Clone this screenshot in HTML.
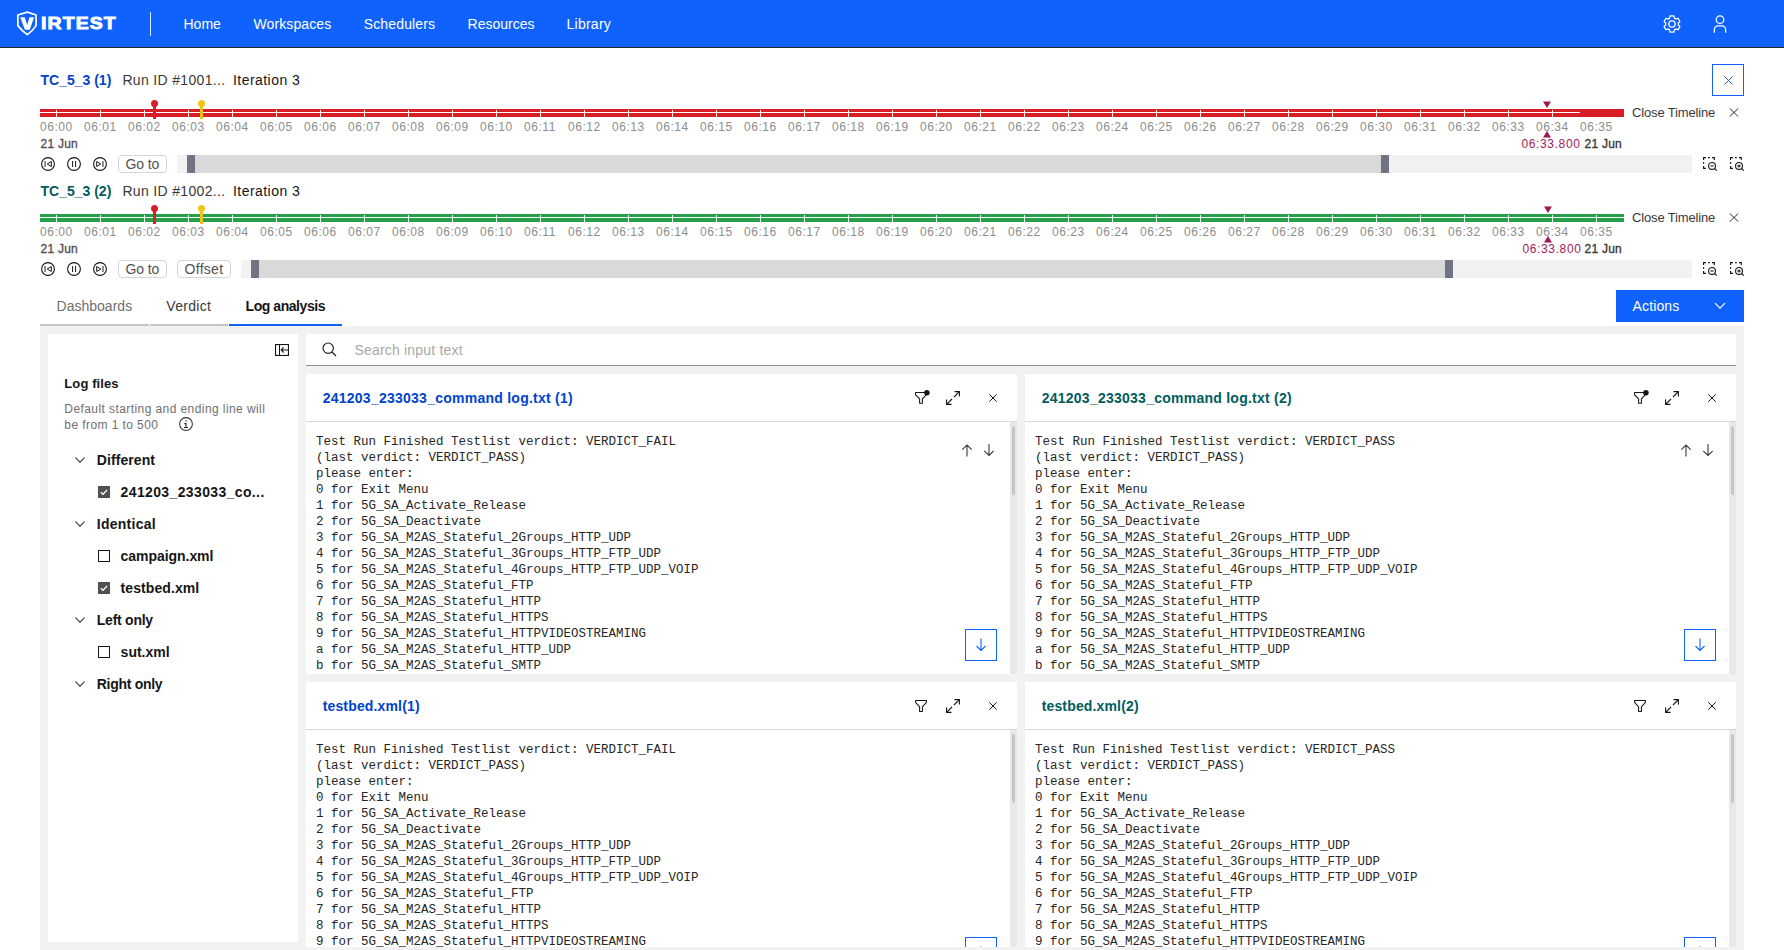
<!DOCTYPE html>
<html><head><meta charset="utf-8"><title>Virtest</title><style>
*{margin:0;padding:0;box-sizing:border-box}
html,body{width:1784px;height:950px;overflow:hidden;background:#fff;font-family:"Liberation Sans",sans-serif}
.t{position:absolute;white-space:pre}
.a{position:absolute}
svg{position:absolute;overflow:visible}
</style></head>
<body>
<div class="a" style="left:0;top:0;width:1784px;height:47px;background:#0f62fe"></div>
<div class="a" style="left:0;top:47px;width:1784px;height:1px;background:#262626"></div>
<svg style="left:16px;top:10px" width="22" height="27" viewBox="0 0 22 27">
<path d="M11.3 2.1 L20.05 5 V15.6 Q17 20.5 11.3 24.6 Q5.6 20.5 1.85 15.6 V5 Z" fill="none" stroke="#fff" stroke-width="1.75" stroke-linejoin="round"/>
<path d="M4.2 7.2 L8.7 7.2 L11.3 15 L13.4 7.2 L18.1 7.2 L13.8 19.8 L8.9 19.8 Z" fill="#fff"/>
</svg>
<div class="t" style="left:41.4px;top:14.91px;font-size:17px;line-height:17px;color:#fff;font-weight:bold;letter-spacing:1px;-webkit-text-stroke:0.9px #fff;transform:scaleX(1.14);transform-origin:0 0;">IRTEST</div>

<div class="a" style="left:150px;top:12px;width:1px;height:24px;background:rgba(255,255,255,0.85)"></div>
<div class="t" style="left:183.5px;top:17.25px;font-size:14px;line-height:14px;color:#fff;font-weight:normal;letter-spacing:0px;">Home</div>

<div class="t" style="left:253.5px;top:17.25px;font-size:14px;line-height:14px;color:#fff;font-weight:normal;letter-spacing:0.1px;">Workspaces</div>

<div class="t" style="left:363.7px;top:17.25px;font-size:14px;line-height:14px;color:#fff;font-weight:normal;letter-spacing:0.15px;">Schedulers</div>

<div class="t" style="left:467.6px;top:17.25px;font-size:14px;line-height:14px;color:#fff;font-weight:normal;letter-spacing:0px;">Resources</div>

<div class="t" style="left:566.5px;top:17.25px;font-size:14px;line-height:14px;color:#fff;font-weight:normal;letter-spacing:0.25px;">Library</div>

<svg style="left:1662px;top:14px" width="20" height="20" viewBox="0 0 32 32">
<path fill="#fff" d="M27 16.76c0-.25 0-.5 0-.76s0-.51 0-.77l1.92-1.68A2 2 0 0 0 29.3 11L26.94 7a2 2 0 0 0-1.73-1 2 2 0 0 0-.64.1l-2.43.82a11.35 11.35 0 0 0-1.31-.75l-.51-2.52a2 2 0 0 0-2-1.61h-4.68a2 2 0 0 0-2 1.61l-.51 2.52a11.48 11.48 0 0 0-1.32.75l-2.38-.86A2 2 0 0 0 6.79 6a2 2 0 0 0-1.73 1L2.7 11a2 2 0 0 0 .41 2.51L5 15.24c0 .25 0 .5 0 .76s0 .51 0 .77l-1.92 1.68A2 2 0 0 0 2.7 21l2.36 4a2 2 0 0 0 1.73 1 2 2 0 0 0 .64-.1l2.43-.82a11.35 11.35 0 0 0 1.31.75l.51 2.52a2 2 0 0 0 2 1.61h4.72a2 2 0 0 0 2-1.61l.51-2.52a11.48 11.48 0 0 0 1.32-.75l2.42.82a2 2 0 0 0 .64.1 2 2 0 0 0 1.73-1l2.28-4a2 2 0 0 0-.41-2.51ZM25.21 24l-3.43-1.16a8.86 8.86 0 0 1-2.71 1.57L18.36 28h-4.72l-.71-3.55a9.36 9.36 0 0 1-2.7-1.57L6.79 24l-2.36-4 2.72-2.4a8.9 8.9 0 0 1 0-3.13L4.43 12l2.36-4 3.43 1.16a8.86 8.86 0 0 1 2.71-1.57L13.64 4h4.72l.71 3.55a9.36 9.36 0 0 1 2.7 1.57L25.21 8l2.36 4-2.72 2.4a8.9 8.9 0 0 1 0 3.13L27.57 20Z"/>
<path fill="#fff" d="M16 22a6 6 0 1 1 6-6 5.94 5.94 0 0 1-6 6Zm0-10a3.91 3.91 0 0 0-4 4 3.91 3.91 0 0 0 4 4 3.91 3.91 0 0 0 4-4 3.91 3.91 0 0 0-4-4Z"/>
</svg>
<svg style="left:1710px;top:14px" width="20" height="20" viewBox="0 0 32 32">
<path fill="#fff" d="M16 4a5 5 0 1 1-5 5 5 5 0 0 1 5-5m0-2a7 7 0 1 0 7 7 7 7 0 0 0-7-7ZM26 30h-2v-5a5 5 0 0 0-5-5h-6a5 5 0 0 0-5 5v5H6v-5a7 7 0 0 1 7-7h6a7 7 0 0 1 7 7Z"/>
</svg><div class="a" style="left:1712px;top:64px;width:32px;height:32px;border:1px solid #0f62fe"></div><svg style="left:1723.5px;top:75.5px" width="9" height="9" viewBox="0 0 9 9"><path d="M0.5 0.5 L8.5 8.5 M8.5 0.5 L0.5 8.5" stroke="#0f62fe" stroke-width="1"/></svg><div class="t" style="left:40.5px;top:73.15px;font-size:14px;line-height:14px;color:#0043ce;font-weight:bold;">TC_5_3 (1)</div>

<div class="t" style="left:122.4px;top:73.15px;font-size:14px;line-height:14px;color:#393939;font-weight:normal;letter-spacing:0.33px;">Run ID #1001...</div>

<div class="t" style="left:233px;top:73.15px;font-size:14px;line-height:14px;color:#161616;font-weight:normal;letter-spacing:0.45px;">Iteration 3</div>

<div class="a" style="left:40px;top:109px;width:1584px;height:8px;background:#da1e28"></div>
<div class="a" style="left:40px;top:112px;width:1540px;height:1px;background:#fff"></div>
<div class="a" style="left:56px;top:110px;width:1px;height:7px;background:#fff"></div>
<div class="a" style="left:100px;top:110px;width:1px;height:7px;background:#fff"></div>
<div class="a" style="left:144px;top:110px;width:1px;height:7px;background:#fff"></div>
<div class="a" style="left:188px;top:110px;width:1px;height:7px;background:#fff"></div>
<div class="a" style="left:232px;top:110px;width:1px;height:7px;background:#fff"></div>
<div class="a" style="left:276px;top:110px;width:1px;height:7px;background:#fff"></div>
<div class="a" style="left:320px;top:110px;width:1px;height:7px;background:#fff"></div>
<div class="a" style="left:364px;top:110px;width:1px;height:7px;background:#fff"></div>
<div class="a" style="left:408px;top:110px;width:1px;height:7px;background:#fff"></div>
<div class="a" style="left:452px;top:110px;width:1px;height:7px;background:#fff"></div>
<div class="a" style="left:496px;top:110px;width:1px;height:7px;background:#fff"></div>
<div class="a" style="left:540px;top:110px;width:1px;height:7px;background:#fff"></div>
<div class="a" style="left:584px;top:110px;width:1px;height:7px;background:#fff"></div>
<div class="a" style="left:628px;top:110px;width:1px;height:7px;background:#fff"></div>
<div class="a" style="left:672px;top:110px;width:1px;height:7px;background:#fff"></div>
<div class="a" style="left:716px;top:110px;width:1px;height:7px;background:#fff"></div>
<div class="a" style="left:760px;top:110px;width:1px;height:7px;background:#fff"></div>
<div class="a" style="left:804px;top:110px;width:1px;height:7px;background:#fff"></div>
<div class="a" style="left:848px;top:110px;width:1px;height:7px;background:#fff"></div>
<div class="a" style="left:892px;top:110px;width:1px;height:7px;background:#fff"></div>
<div class="a" style="left:936px;top:110px;width:1px;height:7px;background:#fff"></div>
<div class="a" style="left:980px;top:110px;width:1px;height:7px;background:#fff"></div>
<div class="a" style="left:1024px;top:110px;width:1px;height:7px;background:#fff"></div>
<div class="a" style="left:1068px;top:110px;width:1px;height:7px;background:#fff"></div>
<div class="a" style="left:1112px;top:110px;width:1px;height:7px;background:#fff"></div>
<div class="a" style="left:1156px;top:110px;width:1px;height:7px;background:#fff"></div>
<div class="a" style="left:1200px;top:110px;width:1px;height:7px;background:#fff"></div>
<div class="a" style="left:1244px;top:110px;width:1px;height:7px;background:#fff"></div>
<div class="a" style="left:1288px;top:110px;width:1px;height:7px;background:#fff"></div>
<div class="a" style="left:1332px;top:110px;width:1px;height:7px;background:#fff"></div>
<div class="a" style="left:1376px;top:110px;width:1px;height:7px;background:#fff"></div>
<div class="a" style="left:1420px;top:110px;width:1px;height:7px;background:#fff"></div>
<div class="a" style="left:1464px;top:110px;width:1px;height:7px;background:#fff"></div>
<div class="a" style="left:1508px;top:110px;width:1px;height:7px;background:#fff"></div>
<div class="a" style="left:1552px;top:110px;width:1px;height:7px;background:#fff"></div>
<div class="t" style="left:40px;top:121.14px;font-size:12px;line-height:12px;color:#8d8d8d;font-weight:normal;letter-spacing:0.55px;">06:00</div>
<div class="t" style="left:84px;top:121.14px;font-size:12px;line-height:12px;color:#8d8d8d;font-weight:normal;letter-spacing:0.55px;">06:01</div>
<div class="t" style="left:128px;top:121.14px;font-size:12px;line-height:12px;color:#8d8d8d;font-weight:normal;letter-spacing:0.55px;">06:02</div>
<div class="t" style="left:172px;top:121.14px;font-size:12px;line-height:12px;color:#8d8d8d;font-weight:normal;letter-spacing:0.55px;">06:03</div>
<div class="t" style="left:216px;top:121.14px;font-size:12px;line-height:12px;color:#8d8d8d;font-weight:normal;letter-spacing:0.55px;">06:04</div>
<div class="t" style="left:260px;top:121.14px;font-size:12px;line-height:12px;color:#8d8d8d;font-weight:normal;letter-spacing:0.55px;">06:05</div>
<div class="t" style="left:304px;top:121.14px;font-size:12px;line-height:12px;color:#8d8d8d;font-weight:normal;letter-spacing:0.55px;">06:06</div>
<div class="t" style="left:348px;top:121.14px;font-size:12px;line-height:12px;color:#8d8d8d;font-weight:normal;letter-spacing:0.55px;">06:07</div>
<div class="t" style="left:392px;top:121.14px;font-size:12px;line-height:12px;color:#8d8d8d;font-weight:normal;letter-spacing:0.55px;">06:08</div>
<div class="t" style="left:436px;top:121.14px;font-size:12px;line-height:12px;color:#8d8d8d;font-weight:normal;letter-spacing:0.55px;">06:09</div>
<div class="t" style="left:480px;top:121.14px;font-size:12px;line-height:12px;color:#8d8d8d;font-weight:normal;letter-spacing:0.55px;">06:10</div>
<div class="t" style="left:524px;top:121.14px;font-size:12px;line-height:12px;color:#8d8d8d;font-weight:normal;letter-spacing:0.55px;">06:11</div>
<div class="t" style="left:568px;top:121.14px;font-size:12px;line-height:12px;color:#8d8d8d;font-weight:normal;letter-spacing:0.55px;">06:12</div>
<div class="t" style="left:612px;top:121.14px;font-size:12px;line-height:12px;color:#8d8d8d;font-weight:normal;letter-spacing:0.55px;">06:13</div>
<div class="t" style="left:656px;top:121.14px;font-size:12px;line-height:12px;color:#8d8d8d;font-weight:normal;letter-spacing:0.55px;">06:14</div>
<div class="t" style="left:700px;top:121.14px;font-size:12px;line-height:12px;color:#8d8d8d;font-weight:normal;letter-spacing:0.55px;">06:15</div>
<div class="t" style="left:744px;top:121.14px;font-size:12px;line-height:12px;color:#8d8d8d;font-weight:normal;letter-spacing:0.55px;">06:16</div>
<div class="t" style="left:788px;top:121.14px;font-size:12px;line-height:12px;color:#8d8d8d;font-weight:normal;letter-spacing:0.55px;">06:17</div>
<div class="t" style="left:832px;top:121.14px;font-size:12px;line-height:12px;color:#8d8d8d;font-weight:normal;letter-spacing:0.55px;">06:18</div>
<div class="t" style="left:876px;top:121.14px;font-size:12px;line-height:12px;color:#8d8d8d;font-weight:normal;letter-spacing:0.55px;">06:19</div>
<div class="t" style="left:920px;top:121.14px;font-size:12px;line-height:12px;color:#8d8d8d;font-weight:normal;letter-spacing:0.55px;">06:20</div>
<div class="t" style="left:964px;top:121.14px;font-size:12px;line-height:12px;color:#8d8d8d;font-weight:normal;letter-spacing:0.55px;">06:21</div>
<div class="t" style="left:1008px;top:121.14px;font-size:12px;line-height:12px;color:#8d8d8d;font-weight:normal;letter-spacing:0.55px;">06:22</div>
<div class="t" style="left:1052px;top:121.14px;font-size:12px;line-height:12px;color:#8d8d8d;font-weight:normal;letter-spacing:0.55px;">06:23</div>
<div class="t" style="left:1096px;top:121.14px;font-size:12px;line-height:12px;color:#8d8d8d;font-weight:normal;letter-spacing:0.55px;">06:24</div>
<div class="t" style="left:1140px;top:121.14px;font-size:12px;line-height:12px;color:#8d8d8d;font-weight:normal;letter-spacing:0.55px;">06:25</div>
<div class="t" style="left:1184px;top:121.14px;font-size:12px;line-height:12px;color:#8d8d8d;font-weight:normal;letter-spacing:0.55px;">06:26</div>
<div class="t" style="left:1228px;top:121.14px;font-size:12px;line-height:12px;color:#8d8d8d;font-weight:normal;letter-spacing:0.55px;">06:27</div>
<div class="t" style="left:1272px;top:121.14px;font-size:12px;line-height:12px;color:#8d8d8d;font-weight:normal;letter-spacing:0.55px;">06:28</div>
<div class="t" style="left:1316px;top:121.14px;font-size:12px;line-height:12px;color:#8d8d8d;font-weight:normal;letter-spacing:0.55px;">06:29</div>
<div class="t" style="left:1360px;top:121.14px;font-size:12px;line-height:12px;color:#8d8d8d;font-weight:normal;letter-spacing:0.55px;">06:30</div>
<div class="t" style="left:1404px;top:121.14px;font-size:12px;line-height:12px;color:#8d8d8d;font-weight:normal;letter-spacing:0.55px;">06:31</div>
<div class="t" style="left:1448px;top:121.14px;font-size:12px;line-height:12px;color:#8d8d8d;font-weight:normal;letter-spacing:0.55px;">06:32</div>
<div class="t" style="left:1492px;top:121.14px;font-size:12px;line-height:12px;color:#8d8d8d;font-weight:normal;letter-spacing:0.55px;">06:33</div>
<div class="t" style="left:1536px;top:121.14px;font-size:12px;line-height:12px;color:#8d8d8d;font-weight:normal;letter-spacing:0.55px;">06:34</div>
<div class="t" style="left:1580px;top:121.14px;font-size:12px;line-height:12px;color:#8d8d8d;font-weight:normal;letter-spacing:0.55px;">06:35</div>

<div class="a" style="left:151.0px;top:100px;width:7px;height:7px;border-radius:50%;background:#da1e28"></div>
<div class="a" style="left:153.0px;top:104px;width:3px;height:15px;background:#da1e28"></div>
<div class="a" style="left:198.0px;top:100px;width:7px;height:7px;border-radius:50%;background:#f1c21b"></div>
<div class="a" style="left:200.0px;top:104px;width:3px;height:15px;background:#f1c21b"></div>
<svg style="left:1542.5px;top:101px" width="8" height="7" viewBox="0 0 8 7"><path d="M0 0.5 H8 L4 7 Z" fill="#9f1853"/></svg>
<svg style="left:1542.5px;top:131px" width="8" height="7" viewBox="0 0 8 7"><path d="M4 0 L8 6.5 H0 Z" fill="#9f1853"/></svg>
<div class="t" style="left:40.5px;top:137.84px;font-size:12px;line-height:12px;color:#525252;font-weight:normal;-webkit-text-stroke:0.35px #525252;letter-spacing:0.25px;">21 Jun</div>

<div class="t" style="left:1521.5px;top:138.44px;font-size:12px;line-height:12px;color:#a2195b;font-weight:normal;letter-spacing:0.62px;">06:33.800</div>

<div class="t" style="left:1584.5px;top:137.84px;font-size:12px;line-height:12px;color:#393939;font-weight:normal;-webkit-text-stroke:0.35px #393939;letter-spacing:0.25px;">21 Jun</div>

<div class="t" style="left:1632px;top:106.0px;font-size:13px;line-height:13px;color:#393939;font-weight:normal;letter-spacing:-0.15px;">Close Timeline</div>

<svg style="left:1729px;top:108px" width="10" height="9" viewBox="0 0 10 9"><path d="M0.8 0.5 L9.2 8.5 M9.2 0.5 L0.8 8.5" stroke="#161616" stroke-width="0.9" fill="none"/></svg>
<svg style="left:41px;top:157px" width="14" height="14" viewBox="0 0 14 14">
<circle cx="7" cy="7" r="6.4" fill="none" stroke="#161616" stroke-width="1.1"/>
<rect x="3.4" y="4" width="1.3" height="6" fill="#555"/>
<path d="M6.2 7 L10.3 4.5 V9.5 Z" fill="none" stroke="#161616" stroke-width="1" stroke-linejoin="round"/>
</svg>
<svg style="left:67px;top:157px" width="14" height="14" viewBox="0 0 14 14">
<circle cx="7" cy="7" r="6.4" fill="none" stroke="#161616" stroke-width="1.1"/>
<rect x="5.1" y="4" width="1" height="6" fill="#161616"/>
<rect x="8.1" y="4" width="1" height="6" fill="#161616"/>
</svg>
<svg style="left:93px;top:157px" width="14" height="14" viewBox="0 0 14 14">
<circle cx="7" cy="7" r="6.4" fill="none" stroke="#161616" stroke-width="1.1"/>
<rect x="9.3" y="4" width="1.3" height="6" fill="#555"/>
<path d="M7.8 7 L3.7 4.5 V9.5 Z" fill="none" stroke="#161616" stroke-width="1" stroke-linejoin="round"/>
</svg>
<div class="a" style="left:118px;top:155px;width:49px;height:18px;border:1px solid #d6d6d6;border-radius:4px"></div>
<div class="t" style="left:125.5px;top:156.95px;font-size:14px;line-height:14px;color:#525252;font-weight:normal;letter-spacing:-0.1px;">Go to</div>

<div class="a" style="left:177px;top:155px;width:1515px;height:18px;background:#f2f2f2"></div>
<div class="a" style="left:187px;top:155px;width:1202px;height:18px;background:#d9d9d9"></div>
<div class="a" style="left:187px;top:155px;width:8px;height:18px;background:#6f7484"></div>
<div class="a" style="left:1381px;top:155px;width:8px;height:18px;background:#6f7484"></div>
<svg style="left:1703px;top:157px" width="15" height="15" viewBox="0 0 15 15">
<path d="M0.6 3 V0.6 H3 M5 0.6 H6.8 M9 0.6 H11.3 V3 M0.6 5 V6.8 M0.6 9 V11.3 H3" fill="none" stroke="#161616" stroke-width="1.15"/>
<circle cx="9" cy="8.9" r="3.45" fill="#fff" stroke="#161616" stroke-width="1.1"/>
<path d="M11.5 11.4 L13.8 13.7" stroke="#161616" stroke-width="1.2"/>
<path d="M7.3 9 H10.7" stroke="#555" stroke-width="1.4"/>
</svg>
<svg style="left:1729.5px;top:157px" width="15" height="15" viewBox="0 0 15 15">
<path d="M0.6 3 V0.6 H3 M5 0.6 H6.8 M9 0.6 H11.3 V3 M0.6 5 V6.8 M0.6 9 V11.3 H3" fill="none" stroke="#161616" stroke-width="1.15"/>
<circle cx="9" cy="8.9" r="3.45" fill="#fff" stroke="#161616" stroke-width="1.1"/>
<path d="M11.5 11.4 L13.8 13.7" stroke="#161616" stroke-width="1.2"/>
<path d="M7.4 9 H10.6 M9 7.4 V10.6" stroke="#333" stroke-width="1.3"/>
</svg><div class="t" style="left:40.5px;top:183.55px;font-size:14px;line-height:14px;color:#005d5d;font-weight:bold;">TC_5_3 (2)</div>

<div class="t" style="left:122.4px;top:183.55px;font-size:14px;line-height:14px;color:#393939;font-weight:normal;letter-spacing:0.33px;">Run ID #1002...</div>

<div class="t" style="left:233px;top:183.55px;font-size:14px;line-height:14px;color:#161616;font-weight:normal;letter-spacing:0.45px;">Iteration 3</div>

<div class="a" style="left:40px;top:214px;width:1584px;height:8px;background:#24a148"></div>
<div class="a" style="left:40px;top:217px;width:1584px;height:1px;background:#fff"></div>
<div class="a" style="left:56px;top:215px;width:1px;height:7px;background:#fff"></div>
<div class="a" style="left:100px;top:215px;width:1px;height:7px;background:#fff"></div>
<div class="a" style="left:144px;top:215px;width:1px;height:7px;background:#fff"></div>
<div class="a" style="left:188px;top:215px;width:1px;height:7px;background:#fff"></div>
<div class="a" style="left:232px;top:215px;width:1px;height:7px;background:#fff"></div>
<div class="a" style="left:276px;top:215px;width:1px;height:7px;background:#fff"></div>
<div class="a" style="left:320px;top:215px;width:1px;height:7px;background:#fff"></div>
<div class="a" style="left:364px;top:215px;width:1px;height:7px;background:#fff"></div>
<div class="a" style="left:408px;top:215px;width:1px;height:7px;background:#fff"></div>
<div class="a" style="left:452px;top:215px;width:1px;height:7px;background:#fff"></div>
<div class="a" style="left:496px;top:215px;width:1px;height:7px;background:#fff"></div>
<div class="a" style="left:540px;top:215px;width:1px;height:7px;background:#fff"></div>
<div class="a" style="left:584px;top:215px;width:1px;height:7px;background:#fff"></div>
<div class="a" style="left:628px;top:215px;width:1px;height:7px;background:#fff"></div>
<div class="a" style="left:672px;top:215px;width:1px;height:7px;background:#fff"></div>
<div class="a" style="left:716px;top:215px;width:1px;height:7px;background:#fff"></div>
<div class="a" style="left:760px;top:215px;width:1px;height:7px;background:#fff"></div>
<div class="a" style="left:804px;top:215px;width:1px;height:7px;background:#fff"></div>
<div class="a" style="left:848px;top:215px;width:1px;height:7px;background:#fff"></div>
<div class="a" style="left:892px;top:215px;width:1px;height:7px;background:#fff"></div>
<div class="a" style="left:936px;top:215px;width:1px;height:7px;background:#fff"></div>
<div class="a" style="left:980px;top:215px;width:1px;height:7px;background:#fff"></div>
<div class="a" style="left:1024px;top:215px;width:1px;height:7px;background:#fff"></div>
<div class="a" style="left:1068px;top:215px;width:1px;height:7px;background:#fff"></div>
<div class="a" style="left:1112px;top:215px;width:1px;height:7px;background:#fff"></div>
<div class="a" style="left:1156px;top:215px;width:1px;height:7px;background:#fff"></div>
<div class="a" style="left:1200px;top:215px;width:1px;height:7px;background:#fff"></div>
<div class="a" style="left:1244px;top:215px;width:1px;height:7px;background:#fff"></div>
<div class="a" style="left:1288px;top:215px;width:1px;height:7px;background:#fff"></div>
<div class="a" style="left:1332px;top:215px;width:1px;height:7px;background:#fff"></div>
<div class="a" style="left:1376px;top:215px;width:1px;height:7px;background:#fff"></div>
<div class="a" style="left:1420px;top:215px;width:1px;height:7px;background:#fff"></div>
<div class="a" style="left:1464px;top:215px;width:1px;height:7px;background:#fff"></div>
<div class="a" style="left:1508px;top:215px;width:1px;height:7px;background:#fff"></div>
<div class="a" style="left:1552px;top:215px;width:1px;height:7px;background:#fff"></div>
<div class="a" style="left:1596px;top:215px;width:1px;height:7px;background:#fff"></div>
<div class="t" style="left:40px;top:226.14px;font-size:12px;line-height:12px;color:#8d8d8d;font-weight:normal;letter-spacing:0.55px;">06:00</div>
<div class="t" style="left:84px;top:226.14px;font-size:12px;line-height:12px;color:#8d8d8d;font-weight:normal;letter-spacing:0.55px;">06:01</div>
<div class="t" style="left:128px;top:226.14px;font-size:12px;line-height:12px;color:#8d8d8d;font-weight:normal;letter-spacing:0.55px;">06:02</div>
<div class="t" style="left:172px;top:226.14px;font-size:12px;line-height:12px;color:#8d8d8d;font-weight:normal;letter-spacing:0.55px;">06:03</div>
<div class="t" style="left:216px;top:226.14px;font-size:12px;line-height:12px;color:#8d8d8d;font-weight:normal;letter-spacing:0.55px;">06:04</div>
<div class="t" style="left:260px;top:226.14px;font-size:12px;line-height:12px;color:#8d8d8d;font-weight:normal;letter-spacing:0.55px;">06:05</div>
<div class="t" style="left:304px;top:226.14px;font-size:12px;line-height:12px;color:#8d8d8d;font-weight:normal;letter-spacing:0.55px;">06:06</div>
<div class="t" style="left:348px;top:226.14px;font-size:12px;line-height:12px;color:#8d8d8d;font-weight:normal;letter-spacing:0.55px;">06:07</div>
<div class="t" style="left:392px;top:226.14px;font-size:12px;line-height:12px;color:#8d8d8d;font-weight:normal;letter-spacing:0.55px;">06:08</div>
<div class="t" style="left:436px;top:226.14px;font-size:12px;line-height:12px;color:#8d8d8d;font-weight:normal;letter-spacing:0.55px;">06:09</div>
<div class="t" style="left:480px;top:226.14px;font-size:12px;line-height:12px;color:#8d8d8d;font-weight:normal;letter-spacing:0.55px;">06:10</div>
<div class="t" style="left:524px;top:226.14px;font-size:12px;line-height:12px;color:#8d8d8d;font-weight:normal;letter-spacing:0.55px;">06:11</div>
<div class="t" style="left:568px;top:226.14px;font-size:12px;line-height:12px;color:#8d8d8d;font-weight:normal;letter-spacing:0.55px;">06:12</div>
<div class="t" style="left:612px;top:226.14px;font-size:12px;line-height:12px;color:#8d8d8d;font-weight:normal;letter-spacing:0.55px;">06:13</div>
<div class="t" style="left:656px;top:226.14px;font-size:12px;line-height:12px;color:#8d8d8d;font-weight:normal;letter-spacing:0.55px;">06:14</div>
<div class="t" style="left:700px;top:226.14px;font-size:12px;line-height:12px;color:#8d8d8d;font-weight:normal;letter-spacing:0.55px;">06:15</div>
<div class="t" style="left:744px;top:226.14px;font-size:12px;line-height:12px;color:#8d8d8d;font-weight:normal;letter-spacing:0.55px;">06:16</div>
<div class="t" style="left:788px;top:226.14px;font-size:12px;line-height:12px;color:#8d8d8d;font-weight:normal;letter-spacing:0.55px;">06:17</div>
<div class="t" style="left:832px;top:226.14px;font-size:12px;line-height:12px;color:#8d8d8d;font-weight:normal;letter-spacing:0.55px;">06:18</div>
<div class="t" style="left:876px;top:226.14px;font-size:12px;line-height:12px;color:#8d8d8d;font-weight:normal;letter-spacing:0.55px;">06:19</div>
<div class="t" style="left:920px;top:226.14px;font-size:12px;line-height:12px;color:#8d8d8d;font-weight:normal;letter-spacing:0.55px;">06:20</div>
<div class="t" style="left:964px;top:226.14px;font-size:12px;line-height:12px;color:#8d8d8d;font-weight:normal;letter-spacing:0.55px;">06:21</div>
<div class="t" style="left:1008px;top:226.14px;font-size:12px;line-height:12px;color:#8d8d8d;font-weight:normal;letter-spacing:0.55px;">06:22</div>
<div class="t" style="left:1052px;top:226.14px;font-size:12px;line-height:12px;color:#8d8d8d;font-weight:normal;letter-spacing:0.55px;">06:23</div>
<div class="t" style="left:1096px;top:226.14px;font-size:12px;line-height:12px;color:#8d8d8d;font-weight:normal;letter-spacing:0.55px;">06:24</div>
<div class="t" style="left:1140px;top:226.14px;font-size:12px;line-height:12px;color:#8d8d8d;font-weight:normal;letter-spacing:0.55px;">06:25</div>
<div class="t" style="left:1184px;top:226.14px;font-size:12px;line-height:12px;color:#8d8d8d;font-weight:normal;letter-spacing:0.55px;">06:26</div>
<div class="t" style="left:1228px;top:226.14px;font-size:12px;line-height:12px;color:#8d8d8d;font-weight:normal;letter-spacing:0.55px;">06:27</div>
<div class="t" style="left:1272px;top:226.14px;font-size:12px;line-height:12px;color:#8d8d8d;font-weight:normal;letter-spacing:0.55px;">06:28</div>
<div class="t" style="left:1316px;top:226.14px;font-size:12px;line-height:12px;color:#8d8d8d;font-weight:normal;letter-spacing:0.55px;">06:29</div>
<div class="t" style="left:1360px;top:226.14px;font-size:12px;line-height:12px;color:#8d8d8d;font-weight:normal;letter-spacing:0.55px;">06:30</div>
<div class="t" style="left:1404px;top:226.14px;font-size:12px;line-height:12px;color:#8d8d8d;font-weight:normal;letter-spacing:0.55px;">06:31</div>
<div class="t" style="left:1448px;top:226.14px;font-size:12px;line-height:12px;color:#8d8d8d;font-weight:normal;letter-spacing:0.55px;">06:32</div>
<div class="t" style="left:1492px;top:226.14px;font-size:12px;line-height:12px;color:#8d8d8d;font-weight:normal;letter-spacing:0.55px;">06:33</div>
<div class="t" style="left:1536px;top:226.14px;font-size:12px;line-height:12px;color:#8d8d8d;font-weight:normal;letter-spacing:0.55px;">06:34</div>
<div class="t" style="left:1580px;top:226.14px;font-size:12px;line-height:12px;color:#8d8d8d;font-weight:normal;letter-spacing:0.55px;">06:35</div>

<div class="a" style="left:151.0px;top:205px;width:7px;height:7px;border-radius:50%;background:#da1e28"></div>
<div class="a" style="left:153.0px;top:209px;width:3px;height:15px;background:#da1e28"></div>
<div class="a" style="left:198.0px;top:205px;width:7px;height:7px;border-radius:50%;background:#f1c21b"></div>
<div class="a" style="left:200.0px;top:209px;width:3px;height:15px;background:#f1c21b"></div>
<svg style="left:1543.5px;top:206px" width="8" height="7" viewBox="0 0 8 7"><path d="M0 0.5 H8 L4 7 Z" fill="#9f1853"/></svg>
<svg style="left:1543.5px;top:236px" width="8" height="7" viewBox="0 0 8 7"><path d="M4 0 L8 6.5 H0 Z" fill="#9f1853"/></svg>
<div class="t" style="left:40.5px;top:242.84px;font-size:12px;line-height:12px;color:#525252;font-weight:normal;-webkit-text-stroke:0.35px #525252;letter-spacing:0.25px;">21 Jun</div>

<div class="t" style="left:1522.5px;top:243.44px;font-size:12px;line-height:12px;color:#a2195b;font-weight:normal;letter-spacing:0.62px;">06:33.800</div>

<div class="t" style="left:1584.5px;top:242.84px;font-size:12px;line-height:12px;color:#393939;font-weight:normal;-webkit-text-stroke:0.35px #393939;letter-spacing:0.25px;">21 Jun</div>

<div class="t" style="left:1632px;top:211.0px;font-size:13px;line-height:13px;color:#393939;font-weight:normal;letter-spacing:-0.15px;">Close Timeline</div>

<svg style="left:1729px;top:213px" width="10" height="9" viewBox="0 0 10 9"><path d="M0.8 0.5 L9.2 8.5 M9.2 0.5 L0.8 8.5" stroke="#161616" stroke-width="0.9" fill="none"/></svg>
<svg style="left:41px;top:262px" width="14" height="14" viewBox="0 0 14 14">
<circle cx="7" cy="7" r="6.4" fill="none" stroke="#161616" stroke-width="1.1"/>
<rect x="3.4" y="4" width="1.3" height="6" fill="#555"/>
<path d="M6.2 7 L10.3 4.5 V9.5 Z" fill="none" stroke="#161616" stroke-width="1" stroke-linejoin="round"/>
</svg>
<svg style="left:67px;top:262px" width="14" height="14" viewBox="0 0 14 14">
<circle cx="7" cy="7" r="6.4" fill="none" stroke="#161616" stroke-width="1.1"/>
<rect x="5.1" y="4" width="1" height="6" fill="#161616"/>
<rect x="8.1" y="4" width="1" height="6" fill="#161616"/>
</svg>
<svg style="left:93px;top:262px" width="14" height="14" viewBox="0 0 14 14">
<circle cx="7" cy="7" r="6.4" fill="none" stroke="#161616" stroke-width="1.1"/>
<rect x="9.3" y="4" width="1.3" height="6" fill="#555"/>
<path d="M7.8 7 L3.7 4.5 V9.5 Z" fill="none" stroke="#161616" stroke-width="1" stroke-linejoin="round"/>
</svg>
<div class="a" style="left:118px;top:260px;width:49px;height:18px;border:1px solid #d6d6d6;border-radius:4px"></div>
<div class="t" style="left:125.5px;top:261.95px;font-size:14px;line-height:14px;color:#525252;font-weight:normal;letter-spacing:-0.1px;">Go to</div>

<div class="a" style="left:177px;top:260px;width:54px;height:18px;border:1px solid #d6d6d6;border-radius:4px"></div>
<div class="t" style="left:184.5px;top:261.95px;font-size:14px;line-height:14px;color:#525252;font-weight:normal;letter-spacing:0.3px;">Offset</div>

<div class="a" style="left:241px;top:260px;width:1451px;height:18px;background:#f2f2f2"></div>
<div class="a" style="left:251px;top:260px;width:1202px;height:18px;background:#d9d9d9"></div>
<div class="a" style="left:251px;top:260px;width:8px;height:18px;background:#6f7484"></div>
<div class="a" style="left:1445px;top:260px;width:8px;height:18px;background:#6f7484"></div>
<svg style="left:1703px;top:262px" width="15" height="15" viewBox="0 0 15 15">
<path d="M0.6 3 V0.6 H3 M5 0.6 H6.8 M9 0.6 H11.3 V3 M0.6 5 V6.8 M0.6 9 V11.3 H3" fill="none" stroke="#161616" stroke-width="1.15"/>
<circle cx="9" cy="8.9" r="3.45" fill="#fff" stroke="#161616" stroke-width="1.1"/>
<path d="M11.5 11.4 L13.8 13.7" stroke="#161616" stroke-width="1.2"/>
<path d="M7.3 9 H10.7" stroke="#555" stroke-width="1.4"/>
</svg>
<svg style="left:1729.5px;top:262px" width="15" height="15" viewBox="0 0 15 15">
<path d="M0.6 3 V0.6 H3 M5 0.6 H6.8 M9 0.6 H11.3 V3 M0.6 5 V6.8 M0.6 9 V11.3 H3" fill="none" stroke="#161616" stroke-width="1.15"/>
<circle cx="9" cy="8.9" r="3.45" fill="#fff" stroke="#161616" stroke-width="1.1"/>
<path d="M11.5 11.4 L13.8 13.7" stroke="#161616" stroke-width="1.2"/>
<path d="M7.4 9 H10.6 M9 7.4 V10.6" stroke="#333" stroke-width="1.3"/>
</svg><div class="t" style="left:56.5px;top:298.55px;font-size:14px;line-height:14px;color:#6f6f6f;font-weight:normal;letter-spacing:0.02px;">Dashboards</div>

<div class="t" style="left:166.3px;top:298.55px;font-size:14px;line-height:14px;color:#393939;font-weight:normal;letter-spacing:0.3px;">Verdict</div>

<div class="t" style="left:245.6px;top:298.55px;font-size:14px;line-height:14px;color:#161616;font-weight:bold;letter-spacing:-0.45px;">Log analysis</div>

<div class="a" style="left:40px;top:324px;width:109px;height:2px;background:#c6c6c6"></div>
<div class="a" style="left:150px;top:324px;width:78px;height:2px;background:#c6c6c6"></div>
<div class="a" style="left:229px;top:324px;width:113px;height:2px;background:#0f62fe"></div>
<div class="a" style="left:1616px;top:290px;width:128px;height:32px;background:#0f62fe"></div>
<div class="t" style="left:1632.5px;top:299.35px;font-size:14px;line-height:14px;color:#fff;font-weight:normal;letter-spacing:0.15px;">Actions</div>

<svg style="left:1714px;top:302px" width="12" height="8" viewBox="0 0 12 8"><path d="M1 1.2 L6 6.2 L11 1.2" fill="none" stroke="#fff" stroke-width="1.2"/></svg>
<div class="a" style="left:40px;top:326px;width:1704px;height:624px;background:#f2f2f2"></div><div class="a" style="left:48px;top:334px;width:250px;height:608px;background:#fff"></div>
<svg style="left:275px;top:344px" width="14" height="12" viewBox="0 0 14 12">
<rect x="0.55" y="0.55" width="12.9" height="10.9" fill="none" stroke="#161616" stroke-width="1.1"/>
<path d="M4.5 0.5 V11.5" stroke="#161616" stroke-width="1"/>
<path d="M13 6 H6.8 M8.6 3.4 L6.3 6 L8.6 8.6" fill="none" stroke="#161616" stroke-width="1.2"/>
</svg>
<div class="t" style="left:64.3px;top:377.0px;font-size:13px;line-height:13px;color:#161616;font-weight:bold;letter-spacing:0.1px;">Log files</div>

<div class="t" style="left:64.3px;top:402.84px;font-size:12px;line-height:12px;color:#6f6f6f;font-weight:normal;letter-spacing:0.42px;">Default starting and ending line will</div>

<div class="t" style="left:64.3px;top:418.84px;font-size:12px;line-height:12px;color:#6f6f6f;font-weight:normal;letter-spacing:0.42px;">be from 1 to 500</div>

<svg style="left:179px;top:417px" width="14" height="14" viewBox="0 0 14 14">
<circle cx="7" cy="7" r="6.4" fill="none" stroke="#333" stroke-width="1.05"/>
<path d="M5.3 6.6 H7 V10.4 M5 10.4 H9" fill="none" stroke="#262626" stroke-width="1.05"/>
<circle cx="7.1" cy="3.9" r="0.8" fill="#555"/>
</svg>
<svg style="left:75px;top:457px" width="10" height="6" viewBox="0 0 10 6"><path d="M0.5 0.6 L5 5.2 L9.5 0.6" fill="none" stroke="#333" stroke-width="1.05"/></svg>
<div class="t" style="left:96.8px;top:453.15px;font-size:14px;line-height:14px;color:#161616;font-weight:bold;letter-spacing:0.08px;">Different</div>

<svg style="left:98px;top:486px" width="12" height="12" viewBox="0 0 12 12"><rect width="12" height="12" fill="#525252"/><path d="M2.8 6.2 L5 8.3 L9.2 3.9" fill="none" stroke="#fff" stroke-width="1.3"/></svg>
<div class="t" style="left:120.6px;top:484.95px;font-size:14px;line-height:14px;color:#161616;font-weight:bold;letter-spacing:0.37px;">241203_233033_co...</div>

<svg style="left:75px;top:521px" width="10" height="6" viewBox="0 0 10 6"><path d="M0.5 0.6 L5 5.2 L9.5 0.6" fill="none" stroke="#333" stroke-width="1.05"/></svg>
<div class="t" style="left:96.8px;top:517.15px;font-size:14px;line-height:14px;color:#161616;font-weight:bold;letter-spacing:0.25px;">Identical</div>

<div class="a" style="left:98px;top:550px;width:12px;height:12px;border:1px solid #161616"></div>
<div class="t" style="left:120.6px;top:548.95px;font-size:14px;line-height:14px;color:#161616;font-weight:bold;letter-spacing:-0.05px;">campaign.xml</div>

<svg style="left:98px;top:582px" width="12" height="12" viewBox="0 0 12 12"><rect width="12" height="12" fill="#525252"/><path d="M2.8 6.2 L5 8.3 L9.2 3.9" fill="none" stroke="#fff" stroke-width="1.3"/></svg>
<div class="t" style="left:120.6px;top:580.95px;font-size:14px;line-height:14px;color:#161616;font-weight:bold;letter-spacing:0.08px;">testbed.xml</div>

<svg style="left:75px;top:617px" width="10" height="6" viewBox="0 0 10 6"><path d="M0.5 0.6 L5 5.2 L9.5 0.6" fill="none" stroke="#333" stroke-width="1.05"/></svg>
<div class="t" style="left:96.8px;top:613.15px;font-size:14px;line-height:14px;color:#161616;font-weight:bold;letter-spacing:-0.25px;">Left only</div>

<div class="a" style="left:98px;top:646px;width:12px;height:12px;border:1px solid #161616"></div>
<div class="t" style="left:120.6px;top:644.95px;font-size:14px;line-height:14px;color:#161616;font-weight:bold;letter-spacing:0px;">sut.xml</div>

<svg style="left:75px;top:681px" width="10" height="6" viewBox="0 0 10 6"><path d="M0.5 0.6 L5 5.2 L9.5 0.6" fill="none" stroke="#333" stroke-width="1.05"/></svg>
<div class="t" style="left:96.8px;top:677.15px;font-size:14px;line-height:14px;color:#161616;font-weight:bold;letter-spacing:-0.3px;">Right only</div>
<div class="a" style="left:306px;top:334px;width:1430px;height:32px;background:#fff;border-bottom:1px solid #8d8d8d"></div>
<svg style="left:322px;top:342px" width="15" height="15" viewBox="0 0 15 15">
<circle cx="6.2" cy="6.2" r="5.2" fill="none" stroke="#161616" stroke-width="1.1"/>
<path d="M10 10 L14 14" stroke="#161616" stroke-width="1.1"/>
</svg>
<div class="t" style="left:354.4px;top:343.05px;font-size:14px;line-height:14px;color:#a8a8a8;font-weight:normal;letter-spacing:0.2px;">Search input text</div>
<div class="a" style="left:306px;top:374px;width:711px;height:300px;background:#fff;overflow:hidden">
<div class="a" style="left:0;top:47px;width:711px;height:1px;background:#d9d9d9"></div>
<div class="t" style="left:16.7px;top:17.45px;font-size:14px;line-height:14px;color:#0043ce;font-weight:bold;letter-spacing:0.25px;">241203_233033_command log.txt (1)</div>

<svg style="left:609px;top:17px" width="15" height="13" viewBox="0 0 15 13">
<path d="M0.55 1.55 H10.6 L10.9 4.2 L7.4 7.9 V12.2 H4.6 V7.9 L0.55 3.8 Z" fill="none" stroke="#161616" stroke-width="1.05" stroke-linejoin="round"/>
<circle cx="11.9" cy="1.8" r="2.75" fill="#161616"/></svg>
<svg style="left:640px;top:17px" width="14" height="14" viewBox="0 0 14 14">
<path d="M8.5 0.6 H13.4 V5.5 M13.4 0.6 L8 6 M0.6 8.5 V13.4 H5.5 M0.6 13.4 L6 8" fill="none" stroke="#161616" stroke-width="1.1"/>
</svg>
<svg style="left:683px;top:20px" width="8" height="8" viewBox="0 0 8 8">
<path d="M0.3 0.3 L7.7 7.7 M7.7 0.3 L0.3 7.7" stroke="#161616" stroke-width="1"/>
</svg>
<div class="a" style="left:704px;top:48px;width:7px;height:252px;background:#e8e8e8"></div>
<div class="a" style="left:706px;top:52px;width:3px;height:69px;background:#c6c6c6;border-radius:2px"></div>
<div class="t" style="left:10px;top:59.7px;font-family:'Liberation Mono',monospace;font-size:12.5px;line-height:16px;color:#262626">Test Run Finished Testlist verdict: VERDICT_FAIL
(last verdict: VERDICT_PASS)
please enter:
0 for Exit Menu
1 for 5G_SA_Activate_Release
2 for 5G_SA_Deactivate
3 for 5G_SA_M2AS_Stateful_2Groups_HTTP_UDP
4 for 5G_SA_M2AS_Stateful_3Groups_HTTP_FTP_UDP
5 for 5G_SA_M2AS_Stateful_4Groups_HTTP_FTP_UDP_VOIP
6 for 5G_SA_M2AS_Stateful_FTP
7 for 5G_SA_M2AS_Stateful_HTTP
8 for 5G_SA_M2AS_Stateful_HTTPS
9 for 5G_SA_M2AS_Stateful_HTTPVIDEOSTREAMING
a for 5G_SA_M2AS_Stateful_HTTP_UDP
b for 5G_SA_M2AS_Stateful_SMTP
c for 5G_SA_M2AS_Stateful_VOIP</div>
<svg style="left:655px;top:69.5px" width="12" height="13" viewBox="0 0 12 13">
<path d="M6 12.5 V1 M1.3 5.7 L6 1 L10.7 5.7" fill="none" stroke="#393939" stroke-width="1.1"/>
</svg>
<svg style="left:677px;top:69.5px" width="12" height="13" viewBox="0 0 12 13">
<path d="M6 0 V11.5 M1.3 6.8 L6 11.5 L10.7 6.8" fill="none" stroke="#393939" stroke-width="1.1"/>
</svg>
<div class="a" style="left:659px;top:255px;width:32px;height:32px;border:1px solid #0f62fe;background:#fff;overflow:hidden"><svg style="left:9px;top:8px" width="12" height="14" viewBox="0 0 12 14"><path d="M6 0.5 V12.5 M1.5 8 L6 12.5 L10.5 8" fill="none" stroke="#0f62fe" stroke-width="1.1"/></svg></div>
</div>
<div class="a" style="left:1025px;top:374px;width:711px;height:300px;background:#fff;overflow:hidden">
<div class="a" style="left:0;top:47px;width:711px;height:1px;background:#d9d9d9"></div>
<div class="t" style="left:16.7px;top:17.45px;font-size:14px;line-height:14px;color:#005d5d;font-weight:bold;letter-spacing:0.25px;">241203_233033_command log.txt (2)</div>

<svg style="left:609px;top:17px" width="15" height="13" viewBox="0 0 15 13">
<path d="M0.55 1.55 H10.6 L10.9 4.2 L7.4 7.9 V12.2 H4.6 V7.9 L0.55 3.8 Z" fill="none" stroke="#161616" stroke-width="1.05" stroke-linejoin="round"/>
<circle cx="11.9" cy="1.8" r="2.75" fill="#161616"/></svg>
<svg style="left:640px;top:17px" width="14" height="14" viewBox="0 0 14 14">
<path d="M8.5 0.6 H13.4 V5.5 M13.4 0.6 L8 6 M0.6 8.5 V13.4 H5.5 M0.6 13.4 L6 8" fill="none" stroke="#161616" stroke-width="1.1"/>
</svg>
<svg style="left:683px;top:20px" width="8" height="8" viewBox="0 0 8 8">
<path d="M0.3 0.3 L7.7 7.7 M7.7 0.3 L0.3 7.7" stroke="#161616" stroke-width="1"/>
</svg>
<div class="a" style="left:704px;top:48px;width:7px;height:252px;background:#e8e8e8"></div>
<div class="a" style="left:706px;top:52px;width:3px;height:69px;background:#c6c6c6;border-radius:2px"></div>
<div class="t" style="left:10px;top:59.7px;font-family:'Liberation Mono',monospace;font-size:12.5px;line-height:16px;color:#262626">Test Run Finished Testlist verdict: VERDICT_PASS
(last verdict: VERDICT_PASS)
please enter:
0 for Exit Menu
1 for 5G_SA_Activate_Release
2 for 5G_SA_Deactivate
3 for 5G_SA_M2AS_Stateful_2Groups_HTTP_UDP
4 for 5G_SA_M2AS_Stateful_3Groups_HTTP_FTP_UDP
5 for 5G_SA_M2AS_Stateful_4Groups_HTTP_FTP_UDP_VOIP
6 for 5G_SA_M2AS_Stateful_FTP
7 for 5G_SA_M2AS_Stateful_HTTP
8 for 5G_SA_M2AS_Stateful_HTTPS
9 for 5G_SA_M2AS_Stateful_HTTPVIDEOSTREAMING
a for 5G_SA_M2AS_Stateful_HTTP_UDP
b for 5G_SA_M2AS_Stateful_SMTP
c for 5G_SA_M2AS_Stateful_VOIP</div>
<svg style="left:655px;top:69.5px" width="12" height="13" viewBox="0 0 12 13">
<path d="M6 12.5 V1 M1.3 5.7 L6 1 L10.7 5.7" fill="none" stroke="#393939" stroke-width="1.1"/>
</svg>
<svg style="left:677px;top:69.5px" width="12" height="13" viewBox="0 0 12 13">
<path d="M6 0 V11.5 M1.3 6.8 L6 11.5 L10.7 6.8" fill="none" stroke="#393939" stroke-width="1.1"/>
</svg>
<div class="a" style="left:659px;top:255px;width:32px;height:32px;border:1px solid #0f62fe;background:#fff;overflow:hidden"><svg style="left:9px;top:8px" width="12" height="14" viewBox="0 0 12 14"><path d="M6 0.5 V12.5 M1.5 8 L6 12.5 L10.5 8" fill="none" stroke="#0f62fe" stroke-width="1.1"/></svg></div>
</div>
<div class="a" style="left:306px;top:682px;width:711px;height:265px;background:#fff;overflow:hidden">
<div class="a" style="left:0;top:47px;width:711px;height:1px;background:#d9d9d9"></div>
<div class="t" style="left:16.7px;top:17.45px;font-size:14px;line-height:14px;color:#0043ce;font-weight:bold;letter-spacing:0.15px;">testbed.xml(1)</div>

<svg style="left:609px;top:17px" width="15" height="13" viewBox="0 0 15 13">
<path d="M0.6 1.55 H11.4 V3.3 L7.4 7.8 V12.4 H4.6 V7.8 L0.6 3.3 Z" fill="none" stroke="#161616" stroke-width="1.05" stroke-linejoin="round"/>
</svg>
<svg style="left:640px;top:17px" width="14" height="14" viewBox="0 0 14 14">
<path d="M8.5 0.6 H13.4 V5.5 M13.4 0.6 L8 6 M0.6 8.5 V13.4 H5.5 M0.6 13.4 L6 8" fill="none" stroke="#161616" stroke-width="1.1"/>
</svg>
<svg style="left:683px;top:20px" width="8" height="8" viewBox="0 0 8 8">
<path d="M0.3 0.3 L7.7 7.7 M7.7 0.3 L0.3 7.7" stroke="#161616" stroke-width="1"/>
</svg>
<div class="a" style="left:704px;top:48px;width:7px;height:300px;background:#e8e8e8"></div>
<div class="a" style="left:706px;top:52px;width:3px;height:69px;background:#c6c6c6;border-radius:2px"></div>
<div class="t" style="left:10px;top:59.7px;font-family:'Liberation Mono',monospace;font-size:12.5px;line-height:16px;color:#262626">Test Run Finished Testlist verdict: VERDICT_FAIL
(last verdict: VERDICT_PASS)
please enter:
0 for Exit Menu
1 for 5G_SA_Activate_Release
2 for 5G_SA_Deactivate
3 for 5G_SA_M2AS_Stateful_2Groups_HTTP_UDP
4 for 5G_SA_M2AS_Stateful_3Groups_HTTP_FTP_UDP
5 for 5G_SA_M2AS_Stateful_4Groups_HTTP_FTP_UDP_VOIP
6 for 5G_SA_M2AS_Stateful_FTP
7 for 5G_SA_M2AS_Stateful_HTTP
8 for 5G_SA_M2AS_Stateful_HTTPS
9 for 5G_SA_M2AS_Stateful_HTTPVIDEOSTREAMING
a for 5G_SA_M2AS_Stateful_HTTP_UDP
b for 5G_SA_M2AS_Stateful_SMTP
c for 5G_SA_M2AS_Stateful_VOIP</div>
<div class="a" style="left:659px;top:255px;width:32px;height:32px;border:1px solid #0f62fe;background:#fff;overflow:hidden"><svg style="left:9px;top:8px" width="12" height="14" viewBox="0 0 12 14"><path d="M6 0.5 V12.5 M1.5 8 L6 12.5 L10.5 8" fill="none" stroke="#0f62fe" stroke-width="1.1"/></svg></div>
</div>
<div class="a" style="left:1025px;top:682px;width:711px;height:265px;background:#fff;overflow:hidden">
<div class="a" style="left:0;top:47px;width:711px;height:1px;background:#d9d9d9"></div>
<div class="t" style="left:16.7px;top:17.45px;font-size:14px;line-height:14px;color:#005d5d;font-weight:bold;letter-spacing:0.15px;">testbed.xml(2)</div>

<svg style="left:609px;top:17px" width="15" height="13" viewBox="0 0 15 13">
<path d="M0.6 1.55 H11.4 V3.3 L7.4 7.8 V12.4 H4.6 V7.8 L0.6 3.3 Z" fill="none" stroke="#161616" stroke-width="1.05" stroke-linejoin="round"/>
</svg>
<svg style="left:640px;top:17px" width="14" height="14" viewBox="0 0 14 14">
<path d="M8.5 0.6 H13.4 V5.5 M13.4 0.6 L8 6 M0.6 8.5 V13.4 H5.5 M0.6 13.4 L6 8" fill="none" stroke="#161616" stroke-width="1.1"/>
</svg>
<svg style="left:683px;top:20px" width="8" height="8" viewBox="0 0 8 8">
<path d="M0.3 0.3 L7.7 7.7 M7.7 0.3 L0.3 7.7" stroke="#161616" stroke-width="1"/>
</svg>
<div class="a" style="left:704px;top:48px;width:7px;height:300px;background:#e8e8e8"></div>
<div class="a" style="left:706px;top:52px;width:3px;height:69px;background:#c6c6c6;border-radius:2px"></div>
<div class="t" style="left:10px;top:59.7px;font-family:'Liberation Mono',monospace;font-size:12.5px;line-height:16px;color:#262626">Test Run Finished Testlist verdict: VERDICT_PASS
(last verdict: VERDICT_PASS)
please enter:
0 for Exit Menu
1 for 5G_SA_Activate_Release
2 for 5G_SA_Deactivate
3 for 5G_SA_M2AS_Stateful_2Groups_HTTP_UDP
4 for 5G_SA_M2AS_Stateful_3Groups_HTTP_FTP_UDP
5 for 5G_SA_M2AS_Stateful_4Groups_HTTP_FTP_UDP_VOIP
6 for 5G_SA_M2AS_Stateful_FTP
7 for 5G_SA_M2AS_Stateful_HTTP
8 for 5G_SA_M2AS_Stateful_HTTPS
9 for 5G_SA_M2AS_Stateful_HTTPVIDEOSTREAMING
a for 5G_SA_M2AS_Stateful_HTTP_UDP
b for 5G_SA_M2AS_Stateful_SMTP
c for 5G_SA_M2AS_Stateful_VOIP</div>
<div class="a" style="left:659px;top:255px;width:32px;height:32px;border:1px solid #0f62fe;background:#fff;overflow:hidden"><svg style="left:9px;top:8px" width="12" height="14" viewBox="0 0 12 14"><path d="M6 0.5 V12.5 M1.5 8 L6 12.5 L10.5 8" fill="none" stroke="#0f62fe" stroke-width="1.1"/></svg></div>
</div>
</body></html>
